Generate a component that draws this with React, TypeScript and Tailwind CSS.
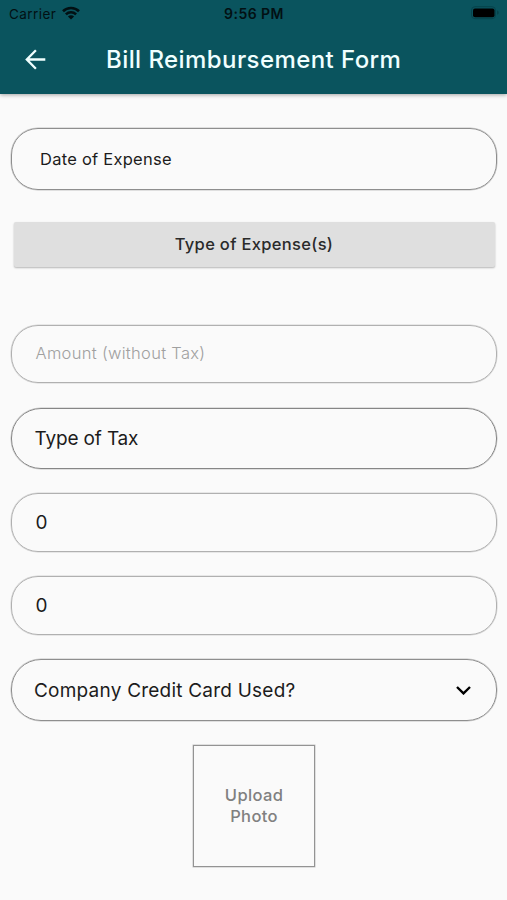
import type { ReactNode } from "react";

type FieldProps = { className: string; children?: ReactNode };

function Field({ className, children }: FieldProps) {
  return (
    <div className={`ml-[11px] flex w-[486px] items-center border ${className}`}>
      {children}
    </div>
  );
}

function StatusBar() {
  return (
    <div className="grid h-[27px] grid-cols-3 items-center text-[#021013]">
      <div className="flex items-center gap-[6px] pl-[9px] pt-px">
        <span className="pt-px text-[13.5px] leading-none tracking-[0.45px]">Carrier</span>
        <svg className="-mt-[3px]" width="18" height="14" viewBox="0 0 18 14" fill="none" stroke="currentColor" strokeWidth="2.6">
          <path d="M1 5.2C5.4 0.9 12.6 0.9 17 5.2" />
          <path d="M3.9 8.4C6.8 5.6 11.2 5.6 14.1 8.4" />
          <path d="M9 13.6L5.9 10.5C7.7 8.9 10.3 8.9 12.1 10.5Z" fill="currentColor" stroke="none" />
        </svg>
      </div>
      <span className="pl-px pt-px text-center text-[14px] font-semibold leading-none tracking-[0.45px]">9:56 PM</span>
      <div className="flex justify-end pr-[7px]">
        <svg className="-mt-px" width="29" height="14" viewBox="0 0 29 14">
          <rect x="0.5" y="0.7" width="24" height="12" rx="3.5" fill="none" stroke="#07434c" />
          <rect x="2" y="2.4" width="21.5" height="8.8" rx="2" fill="#000" />
          <path d="M26 4.6C28.3 5.2 28.3 8.2 26 8.8Z" fill="#07434c" />
        </svg>
      </div>
    </div>
  );
}

export default function App() {
  return (
    <div className="flex h-[900px] w-[507px] flex-col overflow-hidden bg-[#fafafa] font-['Inter','Liberation_Sans',sans-serif] text-[#1c1c1c]">
      <header className="h-[94px] shrink-0 bg-[#0a545e] shadow-[0_1px_4px_rgba(0,0,0,0.35)]">
        <StatusBar />
        <div className="flex h-[66px] items-center text-[#f0ffff]">
          <svg className="-mt-px ml-[25px] shrink-0" width="21" height="21" viewBox="0 0 21 21" fill="none" stroke="currentColor" strokeWidth="2.3">
            <path d="M20.3 10.5H2M10.9 1.2L1.8 10.5L10.9 19.8" />
          </svg>
          <h1 className="ml-[60px] whitespace-nowrap text-[24px] font-medium leading-none tracking-[0.42px]">Bill Reimbursement Form</h1>
        </div>
      </header>

      <Field className="mt-[34px] h-[62px] rounded-[27px] border-[#8e8e8e] pl-[28px] shadow-[0_0_0_0.5px_#c4c4c4]">
        <span className="text-[16.5px] tracking-[0.25px]">Date of Expense</span>
      </Field>

      <button className="ml-[13.5px] mt-[32px] h-[45px] w-[481px] rounded-[2px] bg-[#dfdfdf] text-[16.5px] font-medium tracking-[0.32px] text-[#2a2a2a] shadow-[0_1px_2px_rgba(0,0,0,0.28)]">
        Type of Expense(s)
      </button>

      <Field className="mt-[58px] h-[58px] rounded-[27px] border-[#b0b0b0] pl-[23.5px] shadow-[0_0_0_0.5px_#d4d4d4]">
        <span className="pb-[2px] text-[16.5px] font-light tracking-[0.3px] text-[#a0a0a0]">Amount (without Tax)</span>
      </Field>

      <Field className="mt-[25px] h-[61px] rounded-[30px] border-[#868686] pl-[22.5px] shadow-[0_0_0_0.5px_#c4c4c4]">
        <span className="pt-px text-[19px] tracking-[-0.15px]">Type of Tax</span>
      </Field>

      <Field className="mt-[24px] h-[59px] rounded-[27px] border-[#b0b0b0] pl-[23.5px] shadow-[0_0_0_0.5px_#d4d4d4]">
        <span className="pt-px text-[19px]">0</span>
      </Field>

      <Field className="mt-[24px] h-[59px] rounded-[27px] border-[#b0b0b0] pl-[23.5px] shadow-[0_0_0_0.5px_#d4d4d4]">
        <span className="pt-px text-[19px]">0</span>
      </Field>

      <Field className="mt-[24px] h-[62px] rounded-[30px] border-[#8e8e8e] pl-[22px] shadow-[0_0_0_0.5px_#c4c4c4]">
        <span className="pt-[2px] text-[19px] tracking-[0.22px]">Company Credit Card Used?</span>
        <svg className="ml-auto mr-[25px]" width="15" height="9" viewBox="0 0 15 9" fill="none" stroke="#000" strokeWidth="2.4">
          <path d="M1 1L7.5 7.4L14 1" />
        </svg>
      </Field>

      <button className="mt-[24px] h-[122px] w-[122px] self-center border border-[#939393] pl-px text-[16.5px] font-medium leading-[21px] tracking-[0.35px] text-[#808080] shadow-[0_0_0_0.5px_#c4c4c4]">
        Upload
        <br />
        Photo
      </button>
    </div>
  );
}
